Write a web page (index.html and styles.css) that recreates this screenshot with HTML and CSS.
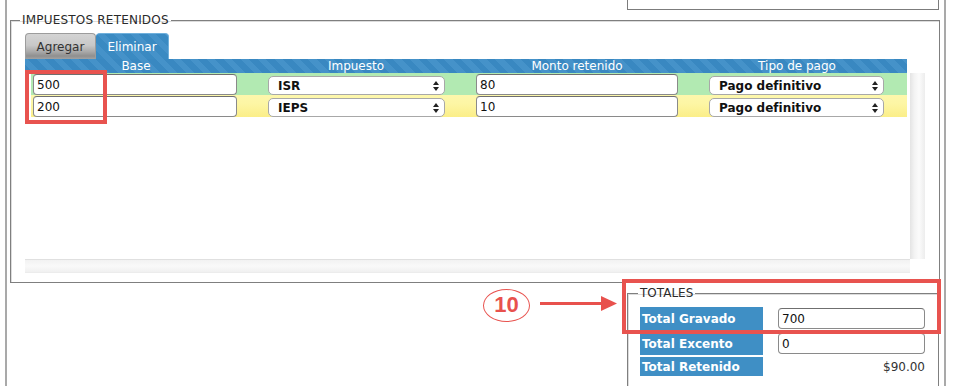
FILE: index.html
```html
<!DOCTYPE html>
<html lang="es">
<head>
<meta charset="utf-8">
<title>Impuestos retenidos</title>
<link rel="stylesheet" href="styles.css">
</head>
<body>
<div class="page">
  <div class="prev-box"></div>

  <fieldset class="fs fs-imp">
    <legend class="lg lg-imp">IMPUESTOS RETENIDOS</legend>
    <div class="tabs">
      <div class="tab tab-gray">Agregar</div>
      <div class="tab tab-blue">Eliminar</div>
    </div>
    <div class="ghead">
      <div class="hc hc1">Base</div>
      <div class="hc hc2">Impuesto</div>
      <div class="hc hc3">Monto retenido</div>
      <div class="hc hc4">Tipo de pago</div>
    </div>
    <div class="scroll">
      <div class="gbody">
        <div class="row row-green">
          <div class="cell c1"><input class="inp w1" value="500"></div>
          <div class="cell c2"><div class="sel w2"><span>ISR</span><svg class="arr" width="6" height="10" viewBox="0 0 6 10"><polygon points="0,4 3,0 6,4"/><polygon points="0,6 3,10 6,6"/></svg></div></div>
          <div class="cell c3"><input class="inp w3" value="80"></div>
          <div class="cell c4"><div class="sel w4"><span>Pago definitivo</span><svg class="arr" width="6" height="10" viewBox="0 0 6 10"><polygon points="0,4 3,0 6,4"/><polygon points="0,6 3,10 6,6"/></svg></div></div>
        </div>
        <div class="row row-yellow">
          <div class="cell c1"><input class="inp w1" value="200"></div>
          <div class="cell c2"><div class="sel w2"><span>IEPS</span><svg class="arr" width="6" height="10" viewBox="0 0 6 10"><polygon points="0,4 3,0 6,4"/><polygon points="0,6 3,10 6,6"/></svg></div></div>
          <div class="cell c3"><input class="inp w3" value="10"></div>
          <div class="cell c4"><div class="sel w4"><span>Pago definitivo</span><svg class="arr" width="6" height="10" viewBox="0 0 6 10"><polygon points="0,4 3,0 6,4"/><polygon points="0,6 3,10 6,6"/></svg></div></div>
        </div>
      </div>
      <div class="vbar"></div>
      <div class="hbar"></div>
      <div class="corner"></div>
    </div>
  </fieldset>

  <div class="totals-row">
    <fieldset class="fs fs-tot">
      <legend class="lg lg-tot">TOTALES</legend>
      <div class="tgrid">
        <div class="tlabel">Total Gravado</div>
        <input class="inp tinp" value="700">
        <div class="tlabel">Total Excento</div>
        <input class="inp tinp" value="0">
        <div class="tlabel">Total Retenido</div>
        <div class="tval">$90.00</div>
      </div>
    </fieldset>
  </div>

  <div class="mark mark-base"></div>
  <div class="mark mark-tot"></div>
  <div class="callout">10</div>
  <svg class="arrow" width="78" height="18" viewBox="0 0 78 18">
    <line x1="0" y1="8.5" x2="63" y2="8.5" stroke="#e8514d" stroke-width="3"/>
    <polygon points="61,1 77,8.5 61,16" fill="#e8514d"/>
  </svg>
</div>
</body>
</html>
```
FILE: styles.css
```css
* { box-sizing: border-box; }
html, body {
  margin: 0;
  padding: 0;
  background: #fff;
  overflow: hidden;
}
body {
  width: 954px;
  height: 386px;
  font-family: "DejaVu Sans", Verdana, sans-serif;
  font-size: 12px;
  color: #222;
}
.page {
  position: relative;
  margin-left: 5px;
  width: 941px;
  height: 386px;
  overflow: hidden;
  border-left: 2px solid #a9a9a9;
  border-right: 2px solid #a9a9a9;
}
.prev-box {
  margin-left: 620px;
  width: 312px;
  height: 10px;
  border: 1px solid #7c7c7c;
  border-top: none;
}

/* fieldsets */
.fs {
  margin: 0;
  border: 1px solid #7f7f7f;
  box-shadow: inset 1px 1px 0 #dcdcdc;
  min-width: 0;
}
.lg {
  font-size: 12px;
  line-height: 14px;
  padding: 0 2px;
  color: #2a2a2a;
}
.fs-imp {
  margin: 3px 4px 0 3px;
  padding: 6px 14px 9px 14px;
}
.lg-imp { margin-left: -5px; letter-spacing: 0.2px; }

/* tabs */
.tabs {
  display: flex;
  height: 26px;
}
.tab {
  height: 26px;
  display: flex;
  align-items: center;
  justify-content: center;
  border-radius: 4px 4px 0 0;
  font-size: 12px;
}
.tab-gray {
  width: 71px;
  color: #333;
  border: 1px solid #9c9c9c;
  border-bottom: none;
  background: linear-gradient(to bottom, #d4d4d4 0%, #c8c8c8 45%, #aaaaaa 70%, #8f8f8f 88%, #a2a2a2 100%);
}
.tab-blue {
  width: 73px;
  color: #fff;
  border: 1px solid #6fb0dc;
  border-bottom: none;
  border-left: none;
  background-color: #3b8cc4;
  background-image: repeating-linear-gradient(45deg, #3a8ac2 0px, #3a8ac2 6px, #4592c9 6px, #4592c9 12px);
}

/* grid header */
.ghead {
  display: flex;
  width: 882px;
  height: 14px;
  line-height: 14px;
  color: #fff;
  font-size: 12px;
  background-color: #3b8cc4;
  background-image: repeating-linear-gradient(45deg, #3988c1 0px, #3988c1 6px, #4592c9 6px, #4592c9 12px);
}
.hc { text-align: center; white-space: nowrap; }
.hc1 { width: 222px; }
.hc2 { width: 218px; }
.hc3 { width: 224px; }
.hc4 { width: 216px; }

/* scroll area */
.scroll {
  display: grid;
  grid-template-columns: 885px 15px;
  grid-template-rows: 186px 14px;
}
.gbody {
  padding-left: 6px;
}
.row {
  display: flex;
  width: 876px;
  height: 22px;
  padding-top: 1px;
}
.row-green { background: #b2eab2; }
.row-yellow { background: linear-gradient(to bottom, #fdf7ac 0%, #fdf6a4 40%, #fbee88 100%); }
.cell { display: flex; align-items: flex-start; }
.c1 { width: 230px; padding-left: 2px; }
.c2 { width: 208px; padding-left: 7px; }
.c3 { width: 233px; padding-left: 7px; }
.c4 { width: 205px; padding-left: 7px; }

.inp {
  height: 21px;
  margin: 0;
  padding: 0 3px;
  border: 1px solid #8a8a8a;
  border-top-color: #6f6f6f;
  border-radius: 4px;
  background: #fff;
  font-family: "DejaVu Sans", Verdana, sans-serif;
  font-size: 12px;
  color: #111;
  outline: none;
}
.w1 { width: 204px; }
.w3 { width: 202px; }

.sel {
  height: 19px;
  margin-top: 2px;
  display: flex;
  align-items: center;
  justify-content: space-between;
  padding: 0 5px 0 9px;
  border: 1px solid #a8a8a8;
  border-radius: 5px;
  background: #fff;
  font-weight: bold;
  font-size: 12px;
  color: #111;
}
.w2 { width: 177px; }
.w4 { width: 175px; }
.arr { fill: #222; flex: none; }

.vbar {
  background: linear-gradient(to right, #e4e4e4 0%, #f3f3f3 30%, #fbfbfb 60%, #ededed 100%);
}
.hbar {
  border-top: 1px solid #e0e0e0;
  background: linear-gradient(to bottom, #f2f2f2 0%, #f9f9f9 50%, #f0f0f0 100%);
  border-bottom: 1px solid #ececec;
}
.corner { background: #fff; }

/* totals */
.totals-row {
  display: flex;
  justify-content: flex-end;
}
.fs-tot {
  width: 312px;
  height: 120px;
  margin: 3px 5px 0 0;
  padding: 7px 13px 0 12px;
}
.lg-tot { margin-left: -2px; }
.tgrid {
  display: grid;
  grid-template-columns: 123px 147px;
  column-gap: 15px;
  grid-template-rows: 23px 23px 19px;
  row-gap: 2px;
}
.tlabel {
  background: #3f8fc5;
  color: #fff;
  font-weight: bold;
  font-size: 12px;
  padding-left: 2px;
  display: flex;
  align-items: center;
  white-space: nowrap;
}
.tinp {
  width: 147px;
  align-self: center;
}
.tval {
  text-align: right;
  align-self: center;
  color: #333;
  font-size: 12px;
}

/* annotations */
.mark {
  position: absolute;
  border: 4px solid #e8534f;
}
.mark-base {
  left: 18px;
  top: 70px;
  width: 82px;
  height: 54px;
}
.mark-tot {
  left: 615px;
  top: 279px;
  width: 319px;
  height: 55px;
}
.callout {
  position: absolute;
  left: 476px;
  top: 289px;
  width: 47px;
  height: 33px;
  border: 1px solid #e8534f;
  border-radius: 50%;
  background: #fff;
  color: #e8514d;
  font-family: "Liberation Sans", Arial, sans-serif;
  font-weight: bold;
  font-size: 22px;
  line-height: 30px;
  text-align: center;
}
.arrow {
  position: absolute;
  left: 533px;
  top: 295px;
}
```
